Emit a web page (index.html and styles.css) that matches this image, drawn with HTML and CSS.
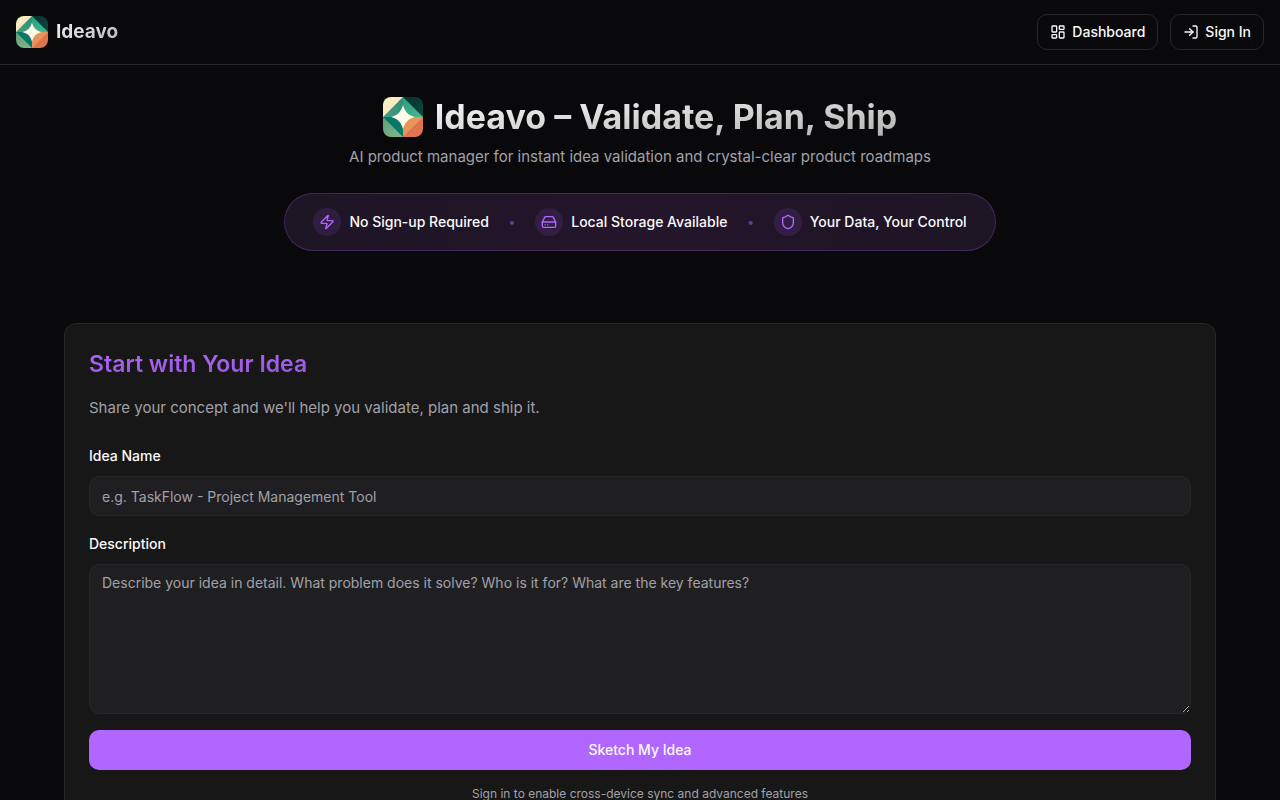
FILE: index.html
```
<!DOCTYPE html>
<html lang="en">
<head>
<meta charset="utf-8">
<meta name="viewport" content="width=device-width, initial-scale=1">
<title>Ideavo – Validate, Plan, Ship</title>
<link rel="stylesheet" href="styles.css">
</head>
<body>
<svg width="0" height="0" class="defs" aria-hidden="true">
  <defs>
    <linearGradient id="g-cream" x1="0" y1="0" x2="1" y2="1"><stop offset="0" stop-color="#fff2c4"/><stop offset="1" stop-color="#efe3b4"/></linearGradient>
    <linearGradient id="g-teal" x1="0" y1="1" x2="1" y2="0"><stop offset="0" stop-color="#4a9c85"/><stop offset="1" stop-color="#2c8c77"/></linearGradient>
    <linearGradient id="g-mint" x1="0" y1="0" x2="1" y2="1"><stop offset="0" stop-color="#2e9c7c"/><stop offset="1" stop-color="#41bb91"/></linearGradient>
    <linearGradient id="g-dark" x1="0" y1="0" x2="1" y2="1"><stop offset="0" stop-color="#06302f"/><stop offset="1" stop-color="#12483f"/></linearGradient>
    <linearGradient id="g-sage" x1="0" y1="0" x2="1" y2="1"><stop offset="0" stop-color="#5f9e79"/><stop offset="1" stop-color="#82b98c"/></linearGradient>
    <symbol id="logo" viewBox="0 0 40 40">
      <path fill="url(#g-cream)" d="M0 0h20v20H0z"/>
      <path fill="url(#g-dark)" d="M20 0h20v20H20z"/>
      <path fill="url(#g-sage)" d="M0 20h20v20H0z"/>
      <path fill="#e07350" d="M20 20h20v20H20z"/>
      <path fill="url(#g-teal)" d="M20 0v20H0z"/>
      <path fill="url(#g-mint)" d="M20 0l20 20H20z"/>
      <path fill="#087968" d="M0 20h20v20z"/>
      <path fill="#e79659" d="M20 20h20L20 40z"/>
      <path fill="#fcfce8" d="M20 8C22 15 25 18 32 20C25 22 22 25 20 32C18 25 15 22 8 20C15 18 18 15 20 8z"/>
    </symbol>
  </defs>
</svg>

<header class="topbar">
  <a class="brand" href="#">
    <svg class="brand-logo" aria-hidden="true"><use href="#logo"/></svg>
    <span class="brand-name">Ideavo</span>
  </a>
  <nav class="actions">
    <button class="btn-outline" type="button">
      <svg class="icon" viewBox="0 0 24 24" aria-hidden="true"><rect width="7" height="9" x="3" y="3" rx="1"/><rect width="7" height="5" x="14" y="3" rx="1"/><rect width="7" height="9" x="14" y="12" rx="1"/><rect width="7" height="5" x="3" y="16" rx="1"/></svg>
      Dashboard
    </button>
    <button class="btn-outline" type="button">
      <svg class="icon" viewBox="0 0 24 24" aria-hidden="true"><path d="M15 3h4a2 2 0 0 1 2 2v14a2 2 0 0 1-2 2h-4"/><path d="m10 17 5-5-5-5"/><path d="M15 12H3"/></svg>
      Sign In
    </button>
  </nav>
</header>

<main class="page">
  <section class="hero">
    <div class="hero-title">
      <svg class="hero-logo" aria-hidden="true"><use href="#logo"/></svg>
      <h1>Ideavo – Validate, Plan, Ship</h1>
    </div>
    <p class="hero-sub">AI product manager for instant idea validation and crystal-clear product roadmaps</p>
    <div class="perks">
      <div class="perk">
        <span class="perk-icon"><svg class="icon" viewBox="0 0 24 24" aria-hidden="true"><path d="M4 14a1 1 0 0 1-.78-1.63l9.9-10.2a.5.5 0 0 1 .86.46l-1.92 6.02A1 1 0 0 0 13 10h7a1 1 0 0 1 .78 1.63l-9.9 10.2a.5.5 0 0 1-.86-.46l1.92-6.02A1 1 0 0 0 11 14z"/></svg></span>
        No Sign-up Required
      </div>
      <span class="dot">•</span>
      <div class="perk">
        <span class="perk-icon"><svg class="icon" viewBox="0 0 24 24" aria-hidden="true"><path d="M22 12H2"/><path d="M5.45 5.11 2 12v6a2 2 0 0 0 2 2h16a2 2 0 0 0 2-2v-6l-3.45-6.89A2 2 0 0 0 16.76 4H7.24a2 2 0 0 0-1.79 1.11z"/><path d="M6 16h.01M10 16h.01"/></svg></span>
        Local Storage Available
      </div>
      <span class="dot">•</span>
      <div class="perk">
        <span class="perk-icon"><svg class="icon" viewBox="0 0 24 24" aria-hidden="true"><path d="M20 13c0 5-3.5 7.5-7.66 8.95a1 1 0 0 1-.67-.01C7.5 20.5 4 18 4 13V6a1 1 0 0 1 1-1c2 0 4.5-1.2 6.24-2.72a1.17 1.17 0 0 1 1.52 0C14.51 3.81 17 5 19 5a1 1 0 0 1 1 1z"/></svg></span>
        Your Data, Your Control
      </div>
    </div>
  </section>

  <section class="card">
    <h2>Start with Your Idea</h2>
    <p class="card-sub">Share your concept and we'll help you validate, plan and ship it.</p>
    <form class="form">
      <div class="field">
        <label for="idea-name">Idea Name</label>
        <input id="idea-name" type="text" placeholder="e.g. TaskFlow - Project Management Tool">
      </div>
      <div class="field">
        <label for="idea-desc">Description</label>
        <textarea id="idea-desc" placeholder="Describe your idea in detail. What problem does it solve? Who is it for? What are the key features?"></textarea>
      </div>
      <button class="btn-primary" type="button">Sketch My Idea</button>
      <p class="note">Sign in to enable cross-device sync and advanced features</p>
    </form>
  </section>
</main>
</body>
</html>
```
FILE: styles.css
```
:root {
  --bg: #09090b;
  --card: #171717;
  --field: #1f1f21;
  --line: #27272a;
  --text: #fafafa;
  --muted: #a1a1aa;
  --accent: #b066ff;
}

*, *::before, *::after { box-sizing: border-box; }

body {
  margin: 0;
  background: var(--bg);
  color: var(--text);
  font: 15px/24px Inter, "Liberation Sans", sans-serif;
}

html { scrollbar-width: none; }

h1, h2, p { margin: 0; }
button, input, textarea { font: inherit; color: inherit; }
.defs { position: absolute; }

.icon {
  width: 16px;
  height: 16px;
  flex: none;
  fill: none;
  stroke: currentColor;
  stroke-width: 2;
  stroke-linecap: round;
  stroke-linejoin: round;
}

.topbar {
  display: flex;
  align-items: center;
  justify-content: space-between;
  padding: 14px 16px;
  border-bottom: 1px solid var(--line);
}

.brand {
  display: flex;
  align-items: center;
  gap: 8px;
  text-decoration: none;
}
.brand-logo { width: 32px; height: 32px; border-radius: 8px; }
.brand-name, h1 {
  background: linear-gradient(to bottom right, #fafafa, #fafafab3);
  background-clip: text;
  color: transparent;
}
.brand-name { font-size: 19px; line-height: 28px; font-weight: 700; }

.actions { display: flex; gap: 12px; }
.btn-outline {
  display: flex;
  align-items: center;
  gap: 6px;
  height: 36px;
  padding: 0 12px;
  border: 1px solid var(--line);
  border-radius: 10px;
  background: transparent;
  font-size: 14px;
  line-height: 20px;
  font-weight: 500;
}

.page {
  display: flex;
  flex-direction: column;
  gap: 72px;
  padding: 32px 64px;
}

.hero {
  display: flex;
  flex-direction: column;
  align-items: center;
  text-align: center;
}
.hero-title { display: flex; align-items: center; gap: 12px; }
.hero-logo { width: 40px; height: 40px; border-radius: 8px; flex: none; }
h1 { font-size: 34px; line-height: 40px; font-weight: 700; }
.hero-sub { margin-top: 8px; color: var(--muted); }

.perks {
  display: flex;
  align-items: center;
  gap: 20px;
  margin-top: 24px;
  padding: 14px 28px;
  border: 1px solid #b066ff40;
  border-radius: 32px;
  background: linear-gradient(to right, #1d1524, #24152b, #1d1524);
  font-size: 14px;
  line-height: 20px;
  font-weight: 500;
}
.perk { display: flex; align-items: center; gap: 8px; }
.perk-icon {
  display: flex;
  padding: 6px;
  border-radius: 50%;
  background: #b066ff1f;
  color: var(--accent);
}
.dot { color: #b066ff80; font-size: 12px; }

.card {
  padding: 24px;
  border: 1px solid var(--line);
  border-radius: 12px;
  background: var(--card);
}
h2 {
  background: linear-gradient(to bottom right, var(--accent), #b066ffb3);
  background-clip: text;
  color: transparent;
  font-size: 23px;
  line-height: 32px;
  font-weight: 600;
}
.card-sub { margin-top: 16px; color: var(--muted); }

.form {
  display: flex;
  flex-direction: column;
  gap: 16px;
  margin-top: 24px;
}
.field { display: flex; flex-direction: column; gap: 8px; }
label { align-self: flex-start; font-size: 14px; font-weight: 500; }
input, textarea {
  width: 100%;
  padding: 8px 12px;
  border: 1px solid var(--line);
  border-radius: 10px;
  background: var(--field);
  font-size: 14px;
  line-height: 20px;
}
input { height: 40px; }
textarea { display: block; min-height: 150px; resize: vertical; }
::placeholder { color: var(--muted); opacity: 1; }

.btn-primary {
  height: 40px;
  border: 0;
  border-radius: 10px;
  background: var(--accent);
  font-size: 14px;
  font-weight: 500;
}
.note { color: var(--muted); font-size: 12px; line-height: 16px; text-align: center; }
```
